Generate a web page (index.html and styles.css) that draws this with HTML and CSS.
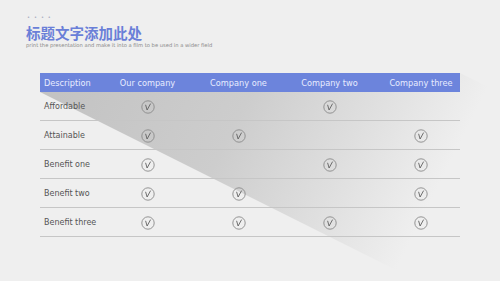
FILE: index.html
```html
<!DOCTYPE html>
<html>
<head>
<meta charset="utf-8">
<link rel="stylesheet" href="styles.css">
</head>
<body>
<div class="slide">
  <svg class="shadow" width="500" height="281" viewBox="0 0 500 281">
    <defs>
      <linearGradient id="sg" gradientUnits="userSpaceOnUse" x1="60" y1="90" x2="400" y2="262">
        <stop offset="0" stop-color="#c3c3c3"/>
        <stop offset="0.45" stop-color="#cdcdcd"/>
        <stop offset="0.75" stop-color="#dfdfdf"/>
        <stop offset="1" stop-color="#efefef"/>
      </linearGradient>
      <symbol id="ck" viewBox="0 0 14 14">
        <circle cx="7" cy="7" r="6.2" fill="none" stroke="#8a8a8a" stroke-width="0.9"/>
        <path d="M4.6 4.8 L6.1 10 L9.6 3.6" fill="none" stroke="#606060" stroke-width="0.9" stroke-linejoin="round"/>
      </symbol>
    </defs>
    <polygon points="40,92 460,73 880,283 460,302" fill="url(#sg)"/>
  </svg>
  <header class="head">
    <div class="dots">• • • •</div>
    <h1 class="title">标题文字添加此处</h1>
    <p class="sub">print the presentation and make it into a film to be used in a wider field</p>
  </header>
  <table class="grid">
    <colgroup><col class="w0"><col class="w1"><col class="w1"><col class="w1"><col class="w4"></colgroup>
    <thead>
      <tr><th class="c0">Description</th><th>Our company</th><th>Company one</th><th>Company two</th><th class="c4">Company three</th></tr>
    </thead>
    <tbody>
      <tr><td class="c0">Affordable</td><td><svg class="ck"><use href="#ck"/></svg></td><td></td><td><svg class="ck"><use href="#ck"/></svg></td><td class="c4"></td></tr>
      <tr><td class="c0">Attainable</td><td><svg class="ck"><use href="#ck"/></svg></td><td><svg class="ck"><use href="#ck"/></svg></td><td></td><td class="c4"><svg class="ck"><use href="#ck"/></svg></td></tr>
      <tr><td class="c0">Benefit one</td><td><svg class="ck"><use href="#ck"/></svg></td><td></td><td><svg class="ck"><use href="#ck"/></svg></td><td class="c4"><svg class="ck"><use href="#ck"/></svg></td></tr>
      <tr><td class="c0">Benefit two</td><td><svg class="ck"><use href="#ck"/></svg></td><td><svg class="ck"><use href="#ck"/></svg></td><td></td><td class="c4"><svg class="ck"><use href="#ck"/></svg></td></tr>
      <tr><td class="c0">Benefit three</td><td><svg class="ck"><use href="#ck"/></svg></td><td><svg class="ck"><use href="#ck"/></svg></td><td><svg class="ck"><use href="#ck"/></svg></td><td class="c4"><svg class="ck"><use href="#ck"/></svg></td></tr>
    </tbody>
  </table>
</div>
</body>
</html>
```
FILE: styles.css
```css
html, body { margin: 0; padding: 0; }
body { background: #efefef; font-family: "DejaVu Sans", "Noto Sans CJK SC", sans-serif; }
.slide { position: relative; width: 500px; height: 281px; overflow: hidden; background: #efefef; }
.shadow { position: absolute; left: 0; top: 0; z-index: 0; }
.head { position: relative; z-index: 1; padding: 14px 0 0 26px; }
.dots { font-size: 5px; letter-spacing: 1.2px; color: #9aa0b8; line-height: 6px; margin-left: 1px; }
.title { margin: 3px 0 0 0; font-family: "Noto Sans CJK SC", sans-serif; font-weight: 700; font-size: 14.5px; line-height: 19px; color: #6a7fd8; }
.sub { margin: 0; font-size: 5.2px; line-height: 7px; color: #8a8a8a; }
.grid { position: relative; z-index: 1; margin: 24px 0 0 40px; width: 420px; border-collapse: collapse; table-layout: fixed; }
.w0 { width: 62px; }
.w1 { width: 91px; }
.w4 { width: 85px; }
.grid th { background: #6c84dc; color: #e8ecff; font-weight: 400; font-size: 8.2px; height: 19px; padding: 0; text-align: center; }
.grid th.c0 { text-align: left; padding-left: 4px; }
.grid .c4 { padding-left: 7px; }
.grid td { height: 28px; border-bottom: 1px solid #c6c6c6; padding: 0; text-align: center; vertical-align: middle; }
.grid td.c0 { text-align: left; padding-left: 4px; font-size: 8px; color: #555; }
.ck { display: inline-block; width: 14px; height: 14px; vertical-align: middle; }
```
